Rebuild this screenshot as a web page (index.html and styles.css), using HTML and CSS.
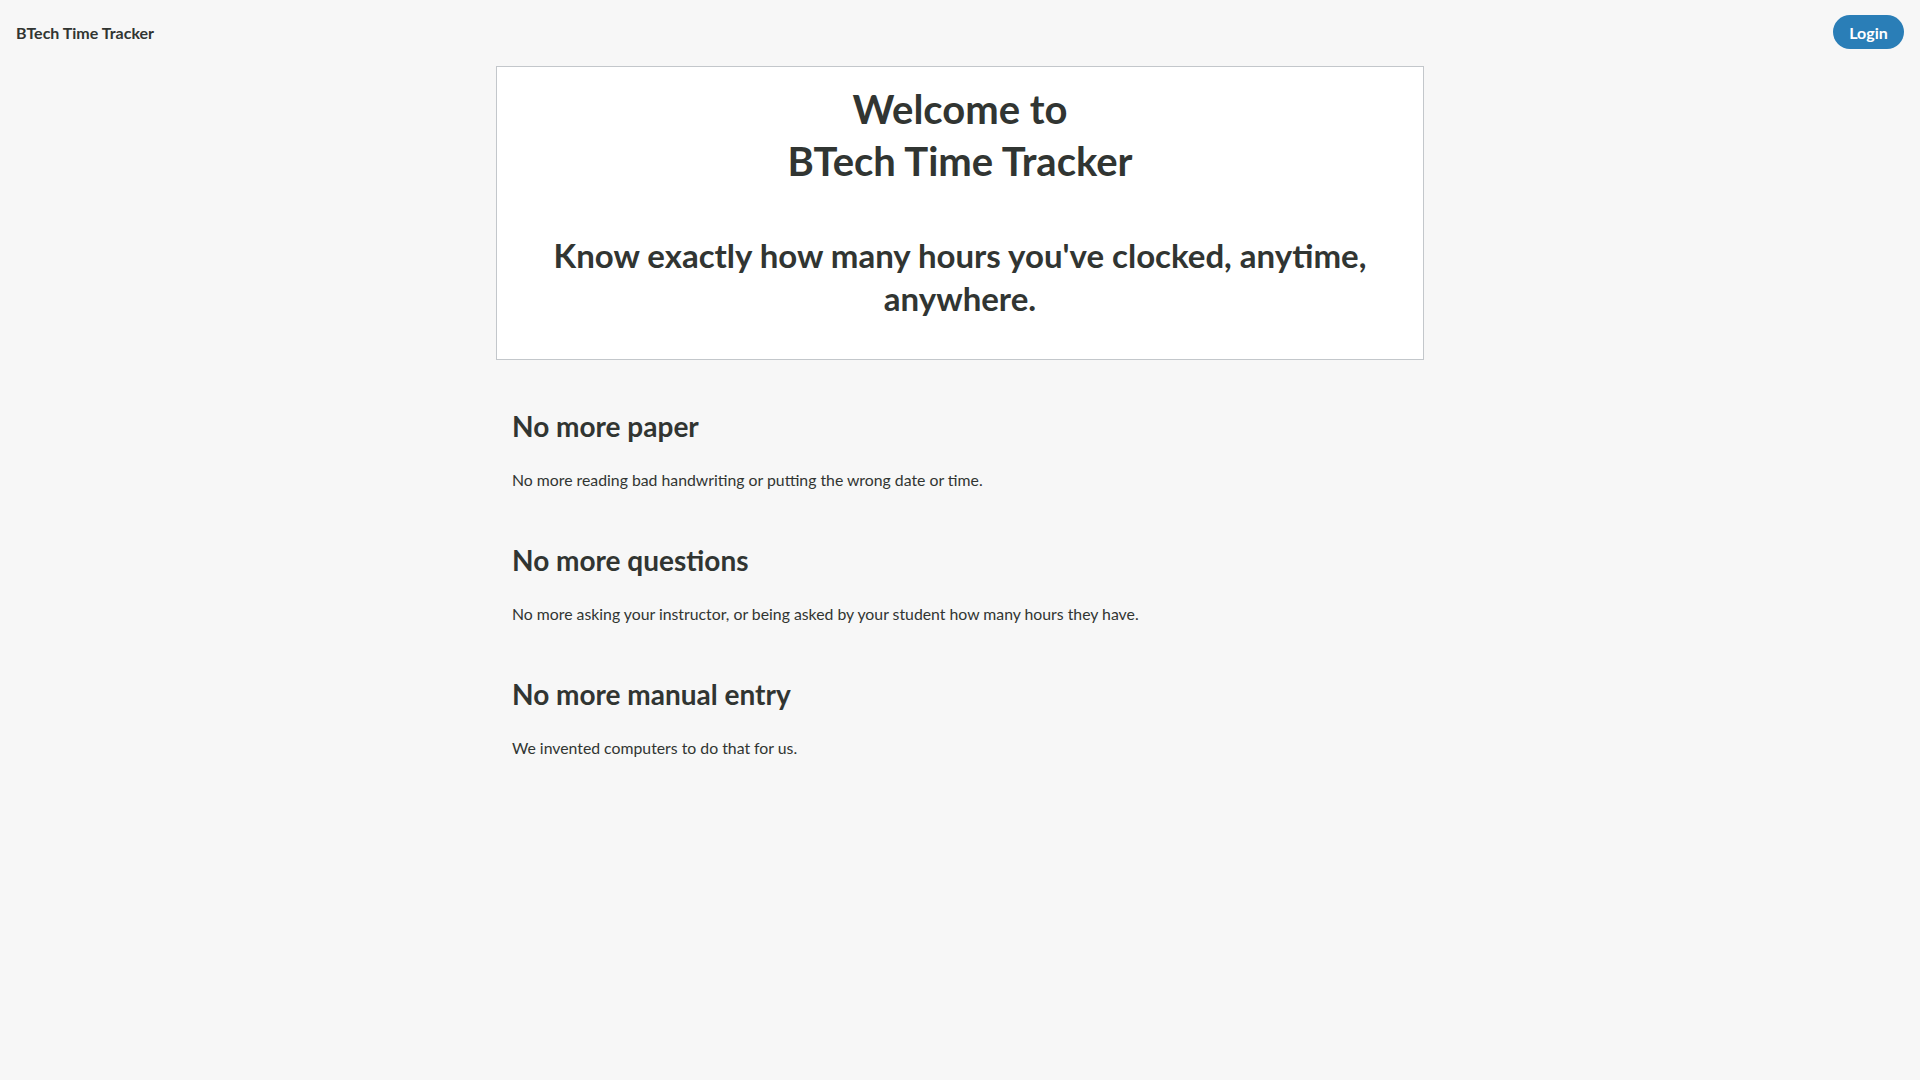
FILE: index.html
```html
<!DOCTYPE html>
<html lang="en">
<head>
<meta charset="utf-8">
<title>BTech Time Tracker</title>
<link rel="stylesheet" href="styles.css">
</head>
<body>
<header class="topbar">
  <div class="brand">BTech Time Tracker</div>
  <button class="login">Login</button>
</header>
<main class="content">
  <section class="hero">
    <h1 class="hero-title">Welcome to<br>BTech Time Tracker</h1>
    <h2 class="hero-sub">Know exactly how many hours you've clocked, anytime, anywhere.</h2>
  </section>
  <section class="features">
    <div class="feature">
      <h3 class="feature-title">No more paper</h3>
      <p class="feature-text">No more reading bad handwriting or putting the wrong date or time.</p>
    </div>
    <div class="feature">
      <h3 class="feature-title">No more questions</h3>
      <p class="feature-text">No more asking your instructor, or being asked by your student how many hours they have.</p>
    </div>
    <div class="feature">
      <h3 class="feature-title">No more manual entry</h3>
      <p class="feature-text">We invented computers to do that for us.</p>
    </div>
  </section>
</main>
</body>
</html>
```
FILE: styles.css
```css
* { box-sizing: border-box; }
html, body { margin: 0; padding: 0; }
body {
  background: #f7f7f7;
  color: #313532;
  font-family: Lato, "Open Sans", sans-serif;
  font-size: 16px;
  min-height: 1080px;
}
.topbar {
  display: flex;
  justify-content: space-between;
  align-items: center;
  padding: 15px 16px 17px;
  height: 66px;
}
.brand {
  font-weight: 700;
  font-size: 16px;
}
.login {
  font-family: Lato, sans-serif;
  font-weight: 700;
  font-size: 16px;
  color: #fff;
  background: #2a7eb7;
  border: none;
  border-radius: 17px;
  height: 34px;
  width: 71px;
  padding: 0;
}
.content {
  width: 928px;
  margin: 0 auto;
}
.hero {
  background: #fff;
  border: 1px solid #c3c7cb;
  text-align: center;
  padding: 16px 16px 39px;
}
.hero-title {
  margin: 0;
  font-size: 40px;
  line-height: 52px;
  font-weight: 700;
}
.hero-sub {
  margin: 47px 0 0;
  font-size: 33px;
  line-height: 43px;
  font-weight: 700;
}
.features {
  padding: 48px 16px 0;
}
.feature-title {
  margin: 0;
  font-size: 28px;
  line-height: 36px;
  font-weight: 700;
}
.feature-text {
  margin: 26px 0 52px;
  font-size: 15.8px;
  line-height: 20px;
}
```
